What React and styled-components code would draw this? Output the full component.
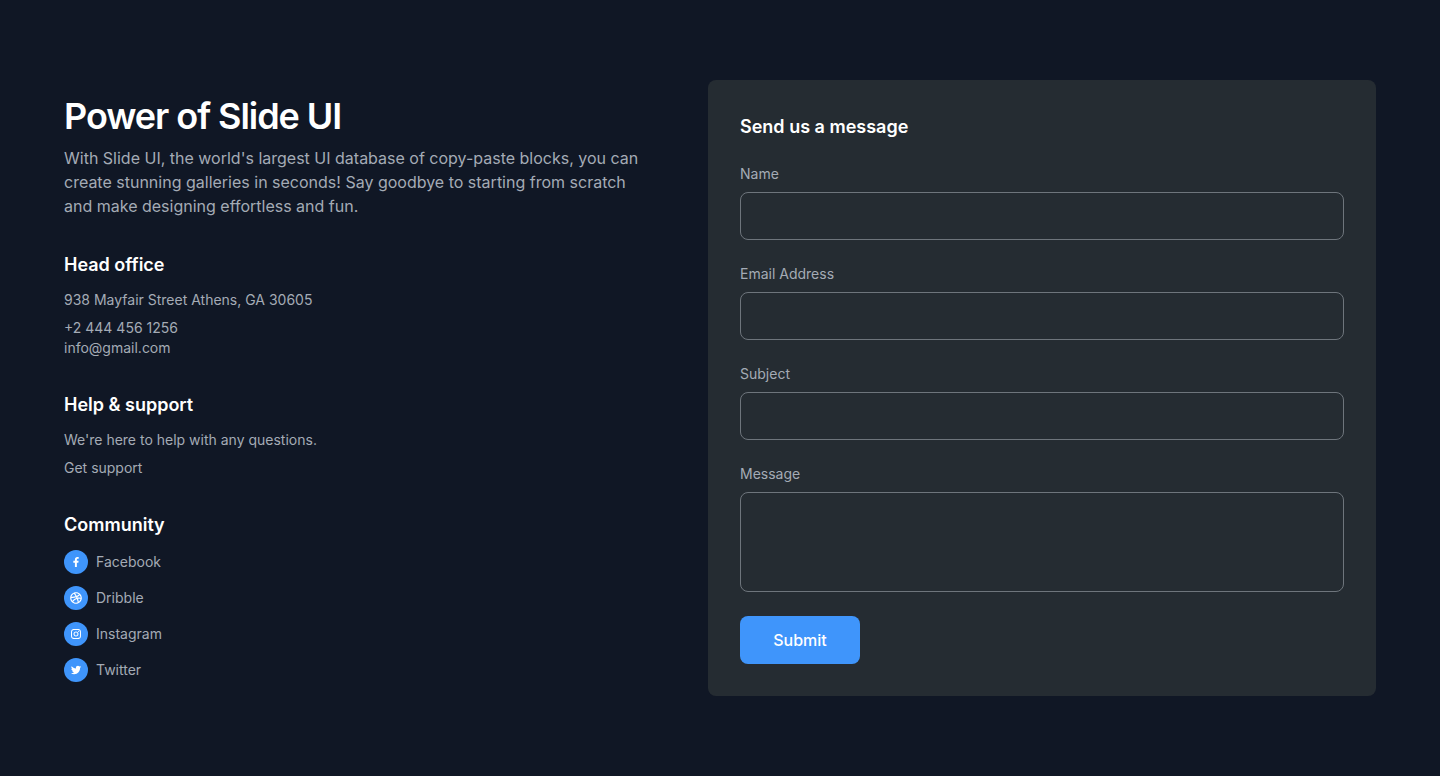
import styled, { createGlobalStyle } from 'styled-components';
import { FaFacebookF } from 'react-icons/fa';
import {
  RiDribbbleLine,
  RiInstagramLine,
  RiTwitterFill,
} from 'react-icons/ri';

const GlobalStyle = createGlobalStyle`
  * {
    box-sizing: border-box;
  }
  body {
    margin: 0;
    background-color: #101725;
    font-family: Inter, sans-serif;
    color: #a4abb5;
  }
`;

const Section = styled.section`
  display: grid;
  grid-template-columns: 580fr 668fr;
  align-items: center;
  gap: 64px;
  padding: 80px 64px;
`;

const Info = styled.div`
  display: flex;
  flex-direction: column;
  gap: 32px;
`;

const Title = styled.h1`
  margin: 0 0 8px;
  font-size: 36px;
  line-height: 44px;
  font-weight: 600;
  letter-spacing: -1.06px;
  color: #ffffff;
`;

const Lead = styled.p`
  margin: 0;
  font-size: 16px;
  line-height: 24px;
`;

const Heading = styled.h2`
  margin: 0 0 -2px;
  font-size: 18px;
  line-height: 30px;
  font-weight: 600;
  color: #ffffff;
`;

const Text = styled.p`
  margin: ${(props) => props.$top || '8px'} 0 0;
  font-size: 14px;
  line-height: 20px;
`;

const SocialList = styled.ul`
  display: flex;
  flex-direction: column;
  gap: 12px;
  margin: 12px 0 0;
  padding: 0;
  list-style: none;
`;

const SocialLink = styled.a`
  display: flex;
  align-items: center;
  gap: 8px;
  font-size: 14px;
  line-height: 20px;
`;

const SocialIcon = styled.span`
  display: flex;
  align-items: center;
  justify-content: center;
  width: 24px;
  height: 24px;
  border-radius: 50%;
  background-color: #3f95fb;
  color: #ffffff;
`;

const Card = styled.form`
  display: flex;
  flex-direction: column;
  align-items: flex-start;
  gap: 24px;
  padding: 32px;
  border-radius: 8px;
  background-color: #252c32;
`;

const Field = styled.label`
  display: flex;
  flex-direction: column;
  gap: 8px;
  width: 100%;
  font-size: 14px;
  line-height: 20px;
`;

const Input = styled.input`
  height: 48px;
  padding: 0 16px;
  outline: none;
  border: 1px solid #6e757c;
  border-radius: 8px;
  background-color: transparent;
  color: inherit;
  font: inherit;
`;

const TextArea = styled(Input)`
  height: 100px;
  padding: 8px 16px;
  resize: none;
`;

const Submit = styled.button`
  width: 120px;
  height: 48px;
  padding: 0;
  border: none;
  border-radius: 8px;
  background-color: #3f95fb;
  color: #ffffff;
  font-family: inherit;
  font-size: 16px;
  font-weight: 500;
`;

const socials = [
  { name: 'Facebook', icon: <FaFacebookF size={10} /> },
  { name: 'Dribble', icon: <RiDribbbleLine size={14} /> },
  { name: 'Instagram', icon: <RiInstagramLine size={12} /> },
  { name: 'Twitter', icon: <RiTwitterFill size={12} /> },
];

const App = () => (
  <>
    <GlobalStyle />
    <Section>
      <Info>
        <div>
          <Title>Power of Slide UI</Title>
          <Lead>
            With Slide UI, the world's largest UI database of copy-paste blocks,
            you can create stunning galleries in seconds! Say goodbye to
            starting from scratch and make designing effortless and fun.
          </Lead>
        </div>
        <div>
          <Heading>Head office</Heading>
          <Text $top="12px">938 Mayfair Street Athens, GA 30605</Text>
          <Text>+2 444 456 1256</Text>
          <Text $top="0">info@gmail.com</Text>
        </div>
        <div>
          <Heading>Help &amp; support</Heading>
          <Text $top="12px">We're here to help with any questions.</Text>
          <Text>Get support</Text>
        </div>
        <div>
          <Heading>Community</Heading>
          <SocialList>
            {socials.map((social) => (
              <li key={social.name}>
                <SocialLink>
                  <SocialIcon>{social.icon}</SocialIcon>
                  {social.name}
                </SocialLink>
              </li>
            ))}
          </SocialList>
        </div>
      </Info>
      <Card>
        <Heading>Send us a message</Heading>
        <Field>
          Name
          <Input type="text" />
        </Field>
        <Field>
          Email Address
          <Input type="email" />
        </Field>
        <Field>
          Subject
          <Input type="text" />
        </Field>
        <Field>
          Message
          <TextArea as="textarea" />
        </Field>
        <Submit type="button">Submit</Submit>
      </Card>
    </Section>
  </>
);

export default App;
